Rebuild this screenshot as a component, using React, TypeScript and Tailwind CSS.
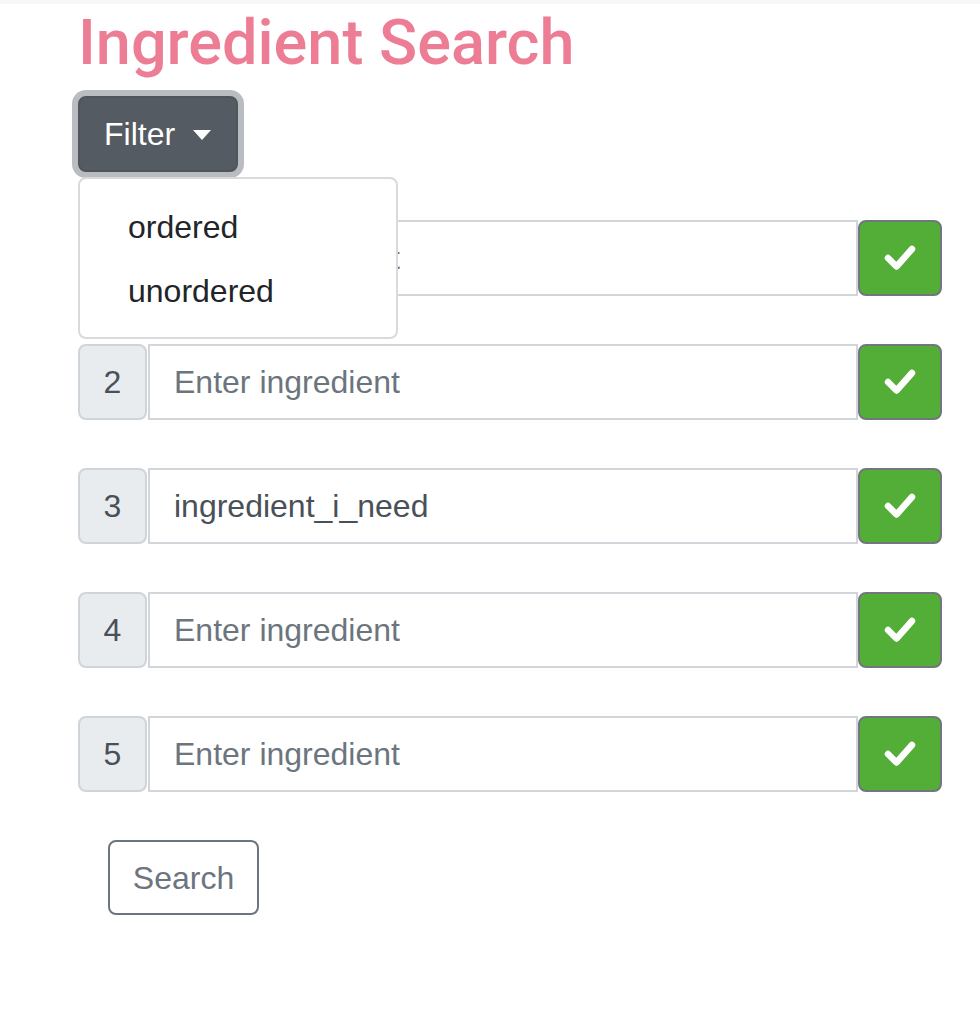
import { useState } from "react";

const rows = [
  { n: 1, value: "" },
  { n: 2, value: "" },
  { n: 3, value: "ingredient_i_need" },
  { n: 4, value: "" },
  { n: 5, value: "" },
];

function Check() {
  return (
    <svg width="32" height="26" viewBox="0 0 32 26" fill="none">
      <polyline
        points="4,13 12.5,21.5 28,4"
        stroke="white"
        strokeWidth="6.5"
        strokeLinecap="round"
        strokeLinejoin="round"
      />
    </svg>
  );
}

export default function App() {
  const [open] = useState(true);

  return (
    <div className="min-h-screen bg-white font-['Liberation_Sans',Arial,sans-serif]">
      <div className="h-[4px] bg-[#f6f7f8]" />
      <div className="pl-[78px] pr-[38px]">
        <h1 className="mt-[7px] font-['Roboto',sans-serif] text-[63px] font-medium leading-[64px] text-[#ec7d94]">
          Ingredient Search
        </h1>

        <div className="relative mt-[21px] mb-[48px]">
          <button className="flex h-[76px] w-[160px] items-center rounded-[8px] border-2 border-[#4e555b] bg-[#545b62] pl-[24px] text-[32px] text-white ring-[6px] ring-[#b9bdc1]">
            Filter
            <span className="ml-[18px] mt-[2px] h-0 w-0 border-x-[9px] border-t-[10px] border-x-transparent border-t-white" />
          </button>

          {open && (
            <div className="absolute left-0 top-[81px] z-10 w-[320px] rounded-[8px] border-2 border-[#dadada] bg-white pt-[16px] pb-[14px]">
              {["ordered", "unordered"].map((item) => (
                <div
                  key={item}
                  className="flex h-[64px] items-center pl-[48px] text-[32px] text-[#212529]"
                >
                  {item}
                </div>
              ))}
            </div>
          )}
        </div>

        <div className="flex flex-col gap-[48px]">
          {rows.map((r) => (
            <div key={r.n} className="flex h-[76px]">
              <div className="mr-[1px] flex w-[69px] items-center justify-center rounded-[8px] border-2 border-[#ced4da] bg-[#e9ecef] text-[32px] text-[#495057]">
                {r.n}
              </div>
              <input
                defaultValue={r.value}
                placeholder="Enter ingredient"
                className="min-w-0 flex-1 border-2 border-[#d2d6db] bg-white pl-[24px] text-[32px] text-[#495057] outline-none placeholder:text-[#6c757d]"
              />
              <button className="flex w-[84px] items-center justify-center rounded-[8px] border-2 border-[#72767d] bg-[#53ae37]">
                <Check />
              </button>
            </div>
          ))}
        </div>

        <button className="mt-[48px] ml-[30px] h-[75px] w-[151px] rounded-[8px] border-2 border-[#6c757d] text-[32px] text-[#6c757d]">
          Search
        </button>
      </div>
    </div>
  );
}
